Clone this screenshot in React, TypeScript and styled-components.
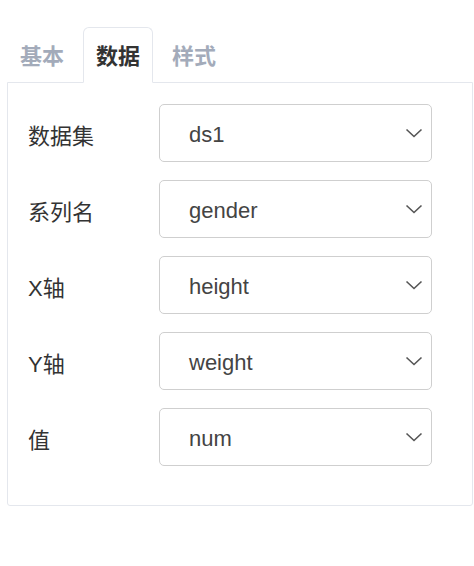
import { createGlobalStyle } from "styled-components";
import styled from "styled-components";
import { useState } from "react";

const GlobalStyle = createGlobalStyle`
  body {
    margin: 0;
    background: #fff;
    font-family: "Liberation Sans", "Noto Sans CJK SC", sans-serif;
  }
`

const SDivPage = styled.div`
  padding: 27px 2px 0 7px;
`

const STabBar = styled.div`
  display: flex;
  gap: 6px;
  position: relative;
  z-index: 1;
`

const STab = styled.div<{ $active: boolean }>`
  box-sizing: border-box;
  height: 56px;
  padding: 0 12px 3px;
  margin-bottom: -1px;
  display: flex;
  align-items: center;
  font-family: "Noto Sans CJK SC", sans-serif;
  font-size: 22px;
  font-weight: 700;
  color: ${p => (p.$active ? "#333" : "#a3abba")};
  background: ${p => (p.$active ? "#fff" : "transparent")};
  border: 1px solid ${p => (p.$active ? "#e4e7ed" : "transparent")};
  border-bottom-color: ${p => (p.$active ? "#fff" : "transparent")};
  border-radius: 6px 6px 0 0;
  cursor: pointer;
`

const SDivPanel = styled.div`
  box-sizing: border-box;
  width: 466px;
  height: 424px;
  border: 1px solid #e4e7ed;
  border-radius: 0 0 3px 3px;
  padding: 21px 40px 0 20px;
  display: flex;
  flex-direction: column;
  gap: 18px;
`

const SDivRow = styled.div`
  display: flex;
  align-items: center;
`

const SLabel = styled.label`
  width: 131px;
  padding-top: 2px;
  font-size: 22px;
  color: #333;
  font-family: "Liberation Sans", "Noto Sans CJK SC", sans-serif;
`

const SDivSelect = styled.div`
  box-sizing: border-box;
  flex: 1;
  height: 58px;
  border: 1.5px solid #cfcfcf;
  border-radius: 5px;
  padding: 0 8px 0 29px;
  display: flex;
  align-items: center;
  justify-content: space-between;
  font-size: 22px;
  color: #444;
  cursor: pointer;

  span {
    padding-top: 3px;
  }
`

const Chevron = () => (
    <svg width="18" height="10" viewBox="0 0 18 10" fill="none">
        <polyline points="1.5,1.5 9,8.5 16.5,1.5" stroke="#555" strokeWidth="1.6"/>
    </svg>
)

const fields = [
    {label: "数据集", value: "ds1"},
    {label: "系列名", value: "gender"},
    {label: "X轴", value: "height"},
    {label: "Y轴", value: "weight"},
    {label: "值", value: "num"},
]

const App = () => {
    const [tab, setTab] = useState<string>("数据")

    return (
        <SDivPage>
            <GlobalStyle/>
            <STabBar>
                {["基本", "数据", "样式"].map(name => (
                    <STab key={name} $active={tab === name} onClick={() => setTab(name)}>{name}</STab>
                ))}
            </STabBar>
            <SDivPanel>
                {fields.map(f => (
                    <SDivRow key={f.label}>
                        <SLabel>{f.label}</SLabel>
                        <SDivSelect>
                            <span>{f.value}</span>
                            <Chevron/>
                        </SDivSelect>
                    </SDivRow>
                ))}
            </SDivPanel>
        </SDivPage>
    )
}

export default App
